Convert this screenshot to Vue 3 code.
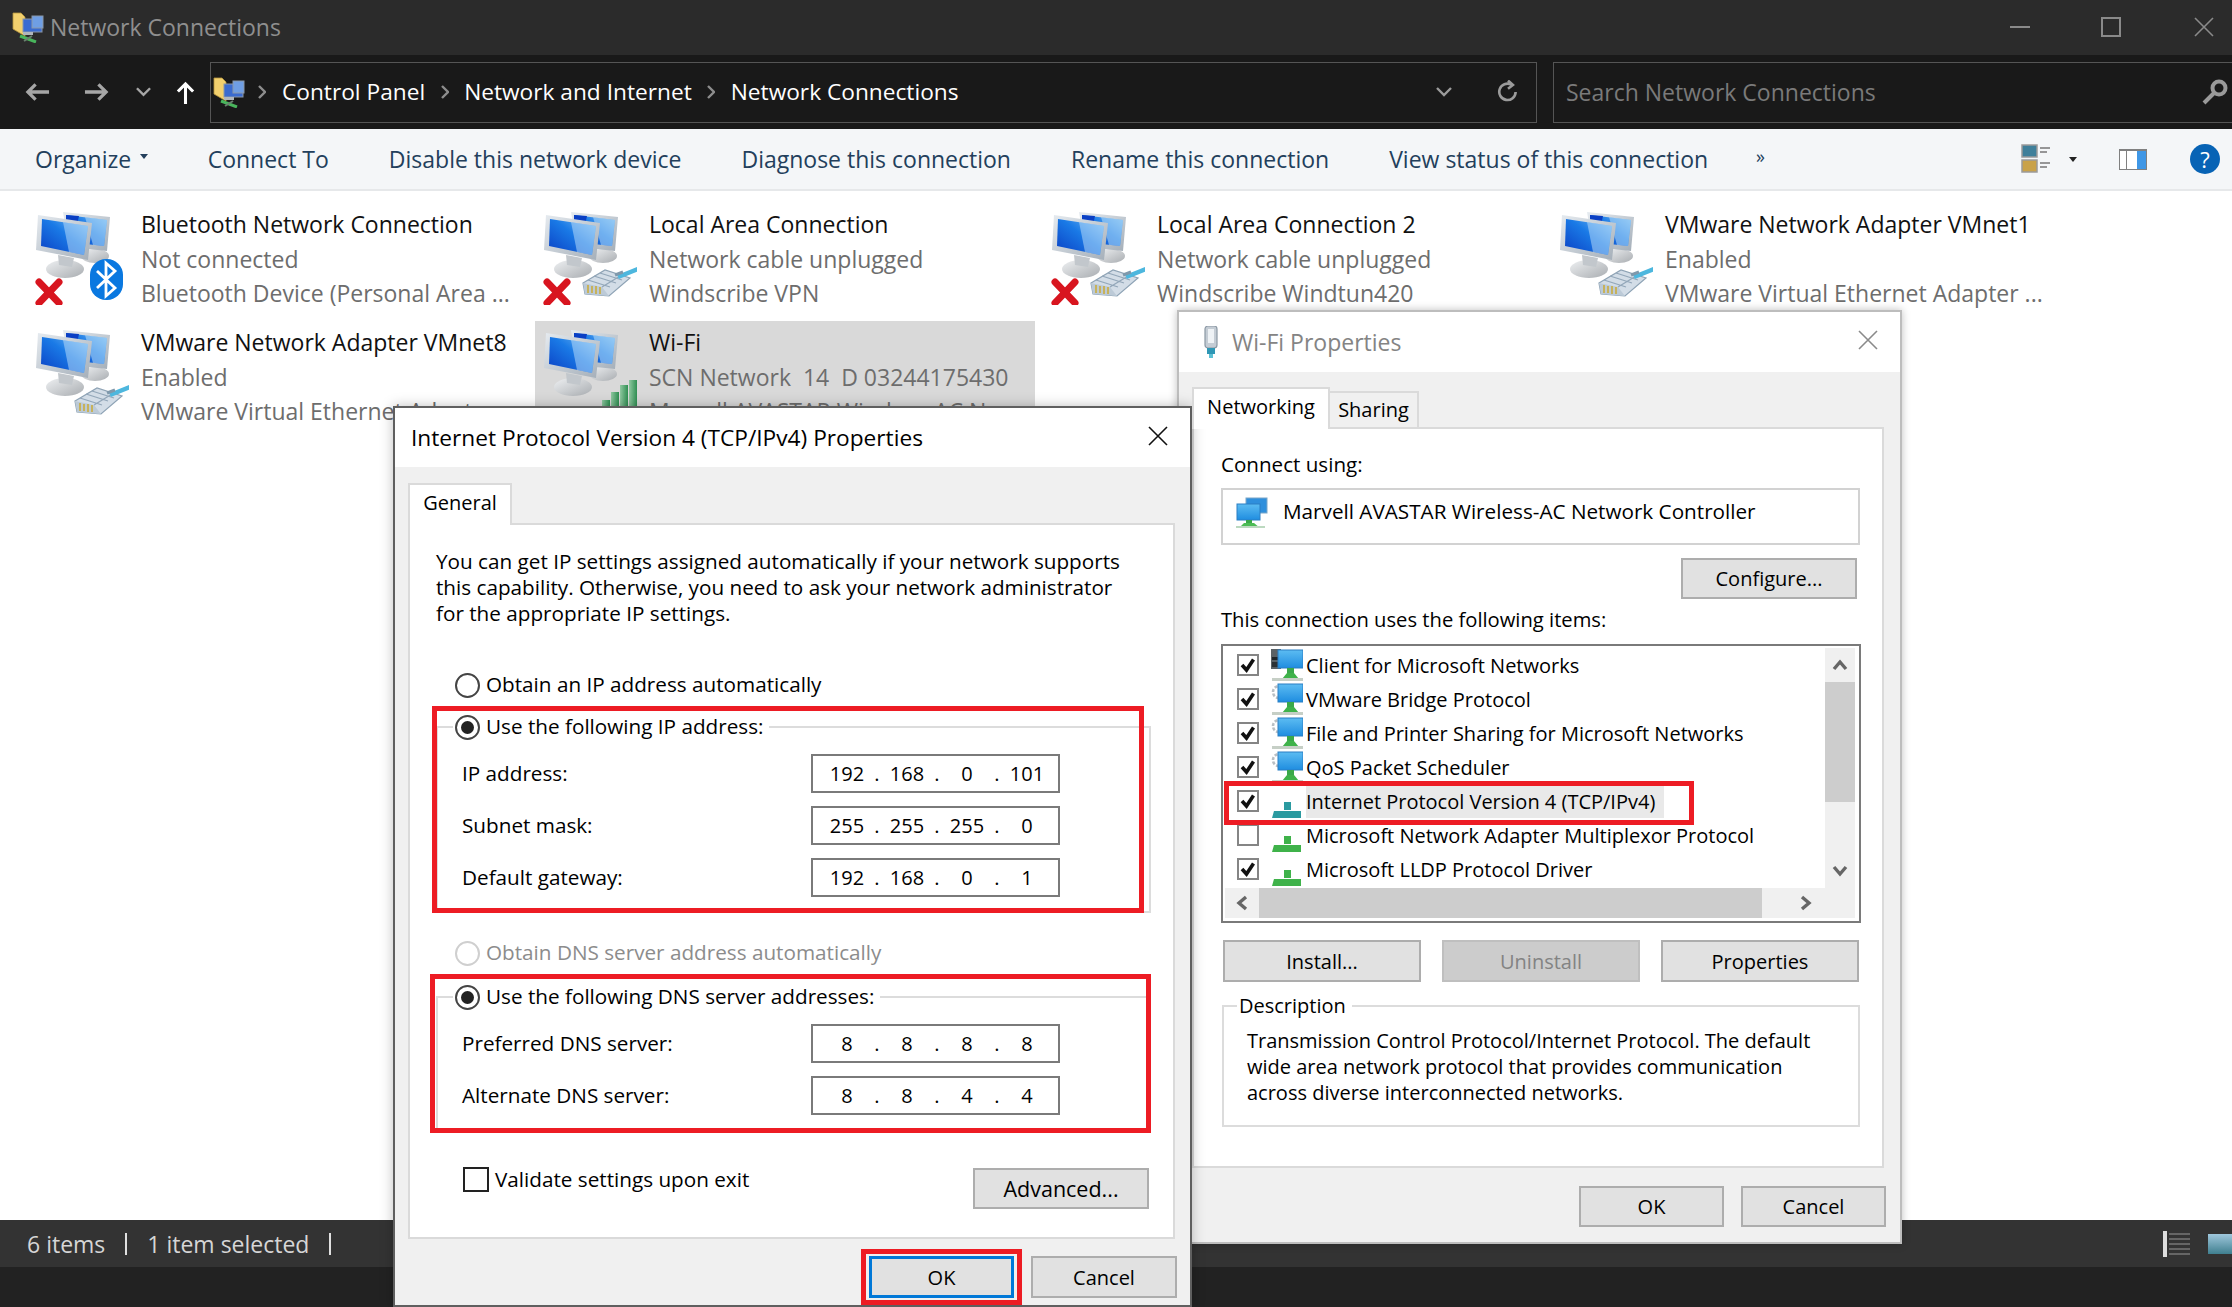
<template>
  <div class="desktop">
    <!-- shared icons -->
    <svg class="defs" aria-hidden="true">
      <defs>
        <linearGradient id="bezel" x1="0" y1="0" x2="1" y2="1">
          <stop offset="0" stop-color="#e6ebf0" />
          <stop offset="1" stop-color="#a4aeb8" />
        </linearGradient>
        <linearGradient id="screen" x1="0" y1="1" x2="1" y2="0">
          <stop offset="0" stop-color="#0a3fc4" />
          <stop offset="0.55" stop-color="#1a7ae6" />
          <stop offset="1" stop-color="#7cc0f4" />
        </linearGradient>
        <linearGradient id="base" x1="0" y1="0" x2="1" y2="1">
          <stop offset="0" stop-color="#eef0f2" />
          <stop offset="1" stop-color="#a9adb1" />
        </linearGradient>
        <linearGradient id="bar" x1="0" y1="0" x2="1" y2="0">
          <stop offset="0" stop-color="#8fc8a0" />
          <stop offset="1" stop-color="#2f8f52" />
        </linearGradient>
        <linearGradient id="lanscreen" x1="0" y1="0" x2="0" y2="1">
          <stop offset="0" stop-color="#5cbcf2" />
          <stop offset="1" stop-color="#1f8de0" />
        </linearGradient>
      </defs>
      <symbol id="pcs" viewBox="0 0 96 100">
        <ellipse cx="62" cy="51" rx="14" ry="7" fill="url(#base)" />
        <polygon points="30,7 77,12 74,46 36,42" fill="url(#bezel)" />
        <polygon points="33,10 74,15 71,41 34,37" fill="url(#screen)" />
        <polygon points="33,10 46,11 44,20 33,18" fill="#0a3fc4" />
        <polygon points="52,12 74,15 71,41 60,40" fill="#b7dcf8" opacity=".55" />
        <ellipse cx="32" cy="64" rx="19" ry="9" fill="url(#base)" />
        <polygon points="25,50 41,53 39,62 26,60" fill="#c2c7cc" />
        <polygon points="5,10 59,18 55,55 3,45" fill="url(#bezel)" />
        <polygon points="9,14 55,21 51,50 8,41" fill="url(#screen)" />
        <polygon points="30,17 55,21 51,50 36,47" fill="#bfe0fa" opacity=".5" />
      </symbol>
      <symbol id="plug" viewBox="0 0 96 100">
        <polygon points="42,78 64,65 89,73 68,91 44,89" fill="#d3dde7" stroke="#8ea3b5" stroke-width="1.2" />
        <polygon points="42,78 61,82 68,91 44,89" fill="#bccad7" />
        <path d="M47,75 L69,82 M53,71 L75,78 M59,68 L81,75 M61,82 L84,68" stroke="#93a7b9" stroke-width="1.3" fill="none" />
        <path d="M47,80 V88 M51,81 V88 M55,81 V89 M59,82 V89" stroke="#c7b25c" stroke-width="2" />
        <path d="M77,72 L97,64" stroke="#4db7de" stroke-width="4.5" />
        <path d="M74,70 L82,67" stroke="#7f98ab" stroke-width="3" />
      </symbol>
      <symbol id="bt" viewBox="0 0 96 100">
        <rect x="57" y="54" width="33" height="41" rx="16" fill="#0a78e0" />
        <path d="M64,66 L82,83 L73,91 L73,58 L82,66 L64,83" fill="none" stroke="#fff" stroke-width="2.8" />
      </symbol>
      <symbol id="cross" viewBox="0 0 96 100">
        <path d="M6,77 L26,98 M26,77 L6,98" stroke="#d8151f" stroke-width="7" stroke-linecap="round" />
      </symbol>
      <symbol id="bars" viewBox="0 0 96 100">
        <rect x="61" y="77" width="8" height="23" fill="url(#bar)" />
        <rect x="70" y="69" width="8" height="31" fill="url(#bar)" />
        <rect x="79" y="62" width="8" height="38" fill="url(#bar)" />
        <rect x="88" y="57" width="8" height="43" fill="url(#bar)" />
      </symbol>
      <symbol id="netfolder" viewBox="0 0 32 32">
        <path d="M1,2 L9,2 L13,6 L13,25 L1,18 Z" fill="#f2d06e" stroke="#b5953c" stroke-width=".8" />
        <rect x="11" y="8" width="19" height="13" fill="#3a6bd0" stroke="#8a98aa" stroke-width="1" />
        <rect x="20" y="5" width="11" height="12" fill="#6f9ee4" stroke="#8a98aa" stroke-width="1" />
        <rect x="11" y="21" width="10" height="3" fill="#b0b6bc" />
        <path d="M8,25 L24,31" stroke="#49b55c" stroke-width="3" />
        <path d="M12,30 L20,25" stroke="#6a7f6e" stroke-width="2" />
      </symbol>
      <symbol id="lan" viewBox="0 0 32 34">
        <rect x="7" y="2" width="25" height="18" fill="url(#lanscreen)" stroke="#2a7fc4" stroke-width="1" />
        <rect x="16" y="20" width="7" height="6" fill="#3aa84a" />
        <polygon points="16,25 23,25 28,31 11,31" fill="#3fb24a" />
        <rect x="1" y="30" width="31" height="3" fill="#c6cfc6" />
      </symbol>
      <symbol id="adapter" viewBox="0 0 32 34">
        <rect x="10" y="1" width="21" height="15" fill="#2f8fdc" stroke="#7aa6c8" stroke-width="1" />
        <rect x="1" y="7" width="23" height="16" fill="url(#lanscreen)" stroke="#2a7fc4" stroke-width="1" />
        <rect x="10" y="23" width="6" height="4" fill="#3aa84a" />
        <polygon points="8,26 18,26 24,31 3,31" fill="#4cbc55" />
        <rect x="0" y="29" width="29" height="2" fill="#bcd9c0" />
      </symbol>
      <symbol id="tower" viewBox="0 0 32 34">
        <rect x="0" y="1" width="10" height="20" fill="#5b6266" />
        <rect x="1" y="9" width="7" height="3" fill="#20262a" />
        <rect x="1" y="14" width="7" height="5" fill="#2c3236" />
      </symbol>
      <symbol id="gear" viewBox="0 0 32 34">
        <circle cx="8" cy="10" r="6" fill="none" stroke="#b9bfc4" stroke-width="2.6" stroke-dasharray="3 1.6" />
      </symbol>
      <symbol id="proto" viewBox="0 0 32 34">
        <rect x="13" y="18" width="7" height="8" fill="currentColor" />
        <polygon points="3,27 30,27 30,34 1,34" fill="currentColor" />
      </symbol>
    </svg>

    <div class="explorer">
      <header class="titlebar">
        <svg class="title-icon"><use href="#netfolder" /></svg>
        <span class="title-text">Network Connections</span>
        <div class="win-ctrls">
          <span class="ctrl-min"></span>
          <span class="ctrl-max"></span>
          <svg class="ctrl-close" viewBox="0 0 20 20"><path d="M1,1 L19,19 M19,1 L1,19" stroke="#8a8a8a" stroke-width="1.6" /></svg>
        </div>
      </header>

      <div class="addressbar">
        <div class="nav">
          <svg class="nav-back" viewBox="0 0 26 20"><path d="M25,10 H3 M11,2 L3,10 L11,18" fill="none" stroke="#a6a6a6" stroke-width="3.4" /></svg>
          <svg class="nav-fwd" viewBox="0 0 26 20"><path d="M1,10 H23 M15,2 L23,10 L15,18" fill="none" stroke="#a6a6a6" stroke-width="3.4" /></svg>
          <svg class="nav-down" viewBox="0 0 16 10"><path d="M1,1 L8,8 L15,1" fill="none" stroke="#a6a6a6" stroke-width="2.6" /></svg>
          <svg class="nav-up" viewBox="0 0 20 24"><path d="M10,24 V3 M2,11 L10,3 L18,11" fill="none" stroke="#fff" stroke-width="3.2" /></svg>
        </div>
        <div class="crumbs">
          <svg class="crumb-icon"><use href="#netfolder" /></svg>
          <template v-for="c in crumbs" :key="c">
            <svg class="crumb-sep" viewBox="0 0 8 14"><path d="M1,1 L7,7 L1,13" fill="none" stroke="#8d8d8d" stroke-width="2.4" /></svg>
            <span class="crumb">{{ c }}</span>
          </template>
          <svg class="crumb-drop" viewBox="0 0 16 10"><path d="M1,1 L8,8 L15,1" fill="none" stroke="#9b9b9b" stroke-width="2.4" /></svg>
          <svg class="crumb-refresh" viewBox="0 0 22 22"><path d="M18,11 A7.5,7.5 0 1 1 14,4.2 M11,0.5 L15.5,4.5 L11,8" fill="none" stroke="#9b9b9b" stroke-width="2.4" /></svg>
        </div>
        <div class="search">
          <span>Search Network Connections</span>
          <svg class="search-icon" viewBox="0 0 26 26"><circle cx="17" cy="9" r="6.5" fill="none" stroke="#9a9a9a" stroke-width="4" /><path d="M12,14 L2,24" stroke="#9a9a9a" stroke-width="4" /></svg>
        </div>
      </div>

      <nav class="toolbar">
        <span class="tool">Organize<i class="caret"></i></span>
        <span v-for="t in tools" :key="t" class="tool">{{ t }}</span>
        <span class="tool-more">»</span>
        <div class="tool-icons">
          <svg class="ti-view" viewBox="0 0 30 30">
            <rect x="1" y="1" width="15" height="12" fill="#3f7f9a" stroke="#9a9a9a" stroke-width="1.5" />
            <rect x="1" y="16" width="15" height="12" fill="#c9a24a" stroke="#9a9a9a" stroke-width="1.5" />
            <path d="M19,4 H29 M19,8 H26 M19,19 H29 M19,23 H26" stroke="#777" stroke-width="1.5" />
          </svg>
          <i class="ti-caret"></i>
          <div class="ti-pane"><span></span><span></span><span></span></div>
          <span class="ti-help">?</span>
        </div>
      </nav>

      <main class="content">
        <div v-for="n in connections" :key="n.name" class="conn" :class="{ selected: n.selected }">
          <svg class="conn-icon">
            <use href="#pcs" />
            <use v-for="b in n.badges" :key="b" :href="'#' + b" />
          </svg>
          <div class="conn-text">
            <div class="conn-name">{{ n.name }}</div>
            <div class="conn-sub">{{ n.status }}</div>
            <div class="conn-sub">{{ n.device }}</div>
          </div>
        </div>
      </main>

      <footer class="statusbar">
        <span>6 items</span>
        <i class="status-sep"></i>
        <span>1 item selected</span>
        <i class="status-sep"></i>
        <div class="status-right">
          <svg class="sr-list" viewBox="0 0 28 26"><path d="M7,3 H28 M7,8 H28 M7,13 H28 M7,18 H28 M7,23 H28" stroke="#777" stroke-width="1.4" /><rect x="1" y="0" width="4" height="26" fill="#ddd" /></svg>
          <span class="sr-thumb"></span>
        </div>
      </footer>
      <div class="taskbar"></div>
    </div>

    <!-- Wi-Fi Properties, behind -->
    <section class="dialog wifi">
      <div class="dlg-title">
        <svg class="wifi-icon" viewBox="0 0 22 32">
          <rect x="5" y="0" width="12" height="22" rx="3" fill="#c4ccd4" stroke="#8b98a4" stroke-width="1.2" />
          <rect x="8" y="3" width="6" height="14" fill="#eef2f5" />
          <rect x="7" y="22" width="8" height="6" fill="#2f97b5" />
          <rect x="9" y="28" width="4" height="4" fill="#5cc0d4" />
        </svg>
        <span class="dlg-caption muted">Wi-Fi Properties</span>
        <svg class="dlg-x" viewBox="0 0 20 20"><path d="M1,1 L19,19 M19,1 L1,19" stroke="#8a8a8a" stroke-width="1.6" /></svg>
      </div>
      <div class="tabs wifi-tabs">
        <span class="tab active">Networking</span>
        <span class="tab back">Sharing</span>
      </div>
      <div class="panel wifi-panel">
        <div class="wifi-label first">Connect using:</div>
        <div class="adapter">
          <svg class="adapter-icon"><use href="#adapter" /></svg>
          <span>Marvell AVASTAR Wireless-AC Network Controller</span>
        </div>
        <div class="cfg-row"><button class="btn cfg">Configure...</button></div>
        <div class="wifi-label">This connection uses the following items:</div>
        <div class="listbox">
          <div class="rows">
            <div v-for="it in items" :key="it.text" class="row" :class="{ sel: it.sel }">
              <span class="chk"><svg v-if="it.on" viewBox="0 0 16 16"><path d="M2,8 L6.5,13 L13.5,2.5" fill="none" stroke="#111" stroke-width="3.6" /></svg></span>
              <svg v-if="it.kind !== 'proto'" class="row-icon">
                <use v-if="it.kind === 'tower'" href="#tower" />
                <use v-if="it.kind === 'gear'" href="#gear" />
                <use href="#lan" />
              </svg>
              <svg v-else class="row-icon" :class="it.sel ? 'teal' : 'green'"><use href="#proto" /></svg>
              <span class="row-text">{{ it.text }}</span>
            </div>
          </div>
          <div class="vscroll">
            <span class="sb-btn"><svg viewBox="0 0 16 12"><path d="M2,10 L8,3 L14,10" fill="none" stroke="#666" stroke-width="3.4" /></svg></span>
            <span class="vthumb"></span>
            <span class="sb-btn down"><svg viewBox="0 0 16 12"><path d="M2,2 L8,9 L14,2" fill="none" stroke="#666" stroke-width="3.4" /></svg></span>
          </div>
          <div class="hscroll">
            <span class="hb-btn"><svg viewBox="0 0 12 16"><path d="M10,2 L3,8 L10,14" fill="none" stroke="#666" stroke-width="3.4" /></svg></span>
            <span class="hthumb"></span>
            <span class="hb-btn right"><svg viewBox="0 0 12 16"><path d="M2,2 L9,8 L2,14" fill="none" stroke="#666" stroke-width="3.4" /></svg></span>
          </div>
        </div>
        <div class="item-btns">
          <button class="btn">Install...</button>
          <button class="btn off">Uninstall</button>
          <button class="btn">Properties</button>
        </div>
        <fieldset class="desc">
          <legend>Description</legend>
          <p>Transmission Control Protocol/Internet Protocol. The default<br>wide area network protocol that provides communication<br>across diverse interconnected networks.</p>
        </fieldset>
      </div>
      <div class="dlg-foot wifi-foot">
        <button class="btn foot">OK</button>
        <button class="btn foot">Cancel</button>
      </div>
      <div class="mark mark-row"></div>
    </section>

    <!-- TCP/IPv4 Properties, in front -->
    <section class="dialog ipv4">
      <div class="dlg-title">
        <span class="dlg-caption">Internet Protocol Version 4 (TCP/IPv4) Properties</span>
        <svg class="dlg-x" viewBox="0 0 20 20"><path d="M1,1 L19,19 M19,1 L1,19" stroke="#111" stroke-width="1.6" /></svg>
      </div>
      <div class="tabs ipv4-tabs">
        <span class="tab active general">General</span>
      </div>
      <div class="panel ipv4-panel">
        <p class="intro">You can get IP settings assigned automatically if your network supports<br>this capability. Otherwise, you need to ask your network administrator<br>for the appropriate IP settings.</p>

        <div class="radio-row first"><i class="radio"></i>Obtain an IP address automatically</div>
        <fieldset class="group">
          <legend><i class="radio on"></i>Use the following IP address:</legend>
          <div class="fields">
            <div v-for="f in ipFields" :key="f.label" class="field">
              <span class="field-label">{{ f.label }}</span>
              <div class="ipbox">
                <template v-for="(o, i) in f.octets" :key="i">
                  <span class="dot" v-if="i > 0">.</span>
                  <span class="octet">{{ o }}</span>
                </template>
              </div>
            </div>
          </div>
        </fieldset>

        <div class="radio-row disabled"><i class="radio"></i>Obtain DNS server address automatically</div>
        <fieldset class="group dns">
          <legend><i class="radio on"></i>Use the following DNS server addresses:</legend>
          <div class="fields">
            <div v-for="f in dnsFields" :key="f.label" class="field">
              <span class="field-label">{{ f.label }}</span>
              <div class="ipbox">
                <template v-for="(o, i) in f.octets" :key="i">
                  <span class="dot" v-if="i > 0">.</span>
                  <span class="octet">{{ o }}</span>
                </template>
              </div>
            </div>
          </div>
        </fieldset>

        <div class="bottom-row">
          <label class="validate"><i class="box"></i><span class="validate-text">Validate settings upon exit</span></label>
          <button class="btn advanced">Advanced...</button>
        </div>
      </div>
      <div class="dlg-foot ipv4-foot">
        <button class="btn foot default">OK</button>
        <button class="btn foot">Cancel</button>
      </div>
      <div class="mark mark-ip"></div>
      <div class="mark mark-dns"></div>
      <div class="mark mark-ok"></div>
    </section>
  </div>
</template>

<script setup>
const crumbs = ['Control Panel', 'Network and Internet', 'Network Connections']
const tools = [
  'Connect To',
  'Disable this network device',
  'Diagnose this connection',
  'Rename this connection',
  'View status of this connection'
]

const connections = [
  { name: 'Bluetooth Network Connection', status: 'Not connected', device: 'Bluetooth Device (Personal Area ...', badges: ['cross', 'bt'] },
  { name: 'Local Area Connection', status: 'Network cable unplugged', device: 'Windscribe VPN', badges: ['cross', 'plug'] },
  { name: 'Local Area Connection 2', status: 'Network cable unplugged', device: 'Windscribe Windtun420', badges: ['cross', 'plug'] },
  { name: 'VMware Network Adapter VMnet1', status: 'Enabled', device: 'VMware Virtual Ethernet Adapter ...', badges: ['plug'] },
  { name: 'VMware Network Adapter VMnet8', status: 'Enabled', device: 'VMware Virtual Ethernet Adapter ...', badges: ['plug'] },
  { name: 'Wi-Fi', status: 'SCN Network  14  D 03244175430', device: 'Marvell AVASTAR Wireless-AC N...', badges: ['bars'], selected: true }
]

const items = [
  { text: 'Client for Microsoft Networks', on: true, kind: 'tower' },
  { text: 'VMware Bridge Protocol', on: true, kind: 'gear' },
  { text: 'File and Printer Sharing for Microsoft Networks', on: true, kind: 'gear' },
  { text: 'QoS Packet Scheduler', on: true, kind: 'gear' },
  { text: 'Internet Protocol Version 4 (TCP/IPv4)', on: true, kind: 'proto', sel: true },
  { text: 'Microsoft Network Adapter Multiplexor Protocol', on: false, kind: 'proto' },
  { text: 'Microsoft LLDP Protocol Driver', on: true, kind: 'proto' }
]

const ipFields = [
  { label: 'IP address:', octets: ['192', '168', '0', '101'] },
  { label: 'Subnet mask:', octets: ['255', '255', '255', '0'] },
  { label: 'Default gateway:', octets: ['192', '168', '0', '1'] }
]
const dnsFields = [
  { label: 'Preferred DNS server:', octets: ['8', '8', '8', '8'] },
  { label: 'Alternate DNS server:', octets: ['8', '8', '4', '4'] }
]
</script>

<style>
html, body { margin: 0; background: #fff; overflow: hidden; }
</style>

<style scoped>
.desktop {
  position: relative;
  width: 2232px;
  height: 1307px;
  overflow: hidden;
  font-family: "Open Sans", "Noto Sans", sans-serif;
}
.defs { position: absolute; width: 0; height: 0; }
i { display: block; font-style: normal; }

/* explorer window */
.explorer { display: flex; flex-direction: column; height: 100%; background: #fff; }
.titlebar { height: 55px; box-sizing: border-box; background: #2b2b2b; display: flex; align-items: center; padding: 0 0 2px 12px; color: #8f8f8f; font-size: 23px; }
.title-icon { width: 32px; height: 32px; margin-right: 6px; }
.win-ctrls { margin-left: auto; display: flex; align-items: center; }
.ctrl-min { width: 20px; height: 2px; background: #8a8a8a; margin-right: 71px; }
.ctrl-max { width: 20px; height: 20px; box-sizing: border-box; border: 2px solid #8a8a8a; margin-right: 73px; }
.ctrl-close { width: 20px; height: 20px; margin-right: 18px; }

.addressbar { height: 74px; background: #191919; display: flex; align-items: center; color: #fff; font-size: 23px; }
.nav { width: 210px; flex: none; display: flex; align-items: center; padding-left: 25px; box-sizing: border-box; }
.nav-back, .nav-fwd { width: 25px; height: 20px; }
.nav-fwd { margin-left: 34px; }
.nav-down { width: 15px; height: 10px; margin-left: 27px; }
.nav-up { width: 19px; height: 23px; margin-left: 25px; }
.crumbs { width: 1327px; height: 61px; box-sizing: border-box; border: 1px solid #555; display: flex; align-items: center; padding-left: 2px; font-size: 22.7px; }
.crumb { margin-top: -2px; }
.crumb-icon { width: 32px; height: 32px; }
.crumb-sep { width: 8px; height: 14px; margin: 0 15.5px; }
.crumb-icon + .crumb-sep { margin-left: 13px; margin-right: 16px; }
.crumb-drop { width: 16px; height: 10px; margin-left: auto; }
.crumb-refresh { width: 24px; height: 24px; margin-left: 44px; margin-right: 16px; }
.search { flex: 1; height: 61px; margin-left: 16px; box-sizing: border-box; border: 1px solid #555; border-right: 0; display: flex; align-items: center; padding-left: 12px; color: #7a7a7a; }
.search-icon { width: 26px; height: 26px; margin-left: auto; margin-right: 4px; }

.toolbar { height: 62px; box-sizing: border-box; background: #f4f6f8; border-bottom: 2px solid #e6e8ea; display: flex; align-items: center; padding-left: 35px; gap: 60px; color: #233f5c; font-size: 23px; }
.tool { display: flex; align-items: center; white-space: nowrap; }
.caret { width: 0; height: 0; border: 4px solid transparent; border-top: 5px solid #233f5c; border-bottom: 0; margin-left: 8.5px; margin-top: -6px; }
.tool-more { margin-left: -12px; font-size: 18px; margin-top: -6px; }
.tool-icons { margin-left: auto; display: flex; align-items: center; padding-right: 12px; }
.ti-view { width: 30px; height: 30px; }
.ti-caret { width: 0; height: 0; border: 4px solid transparent; border-top: 5px solid #222; border-bottom: 0; margin-left: 18px; }
.ti-pane { width: 28px; height: 21px; margin-left: 42px; display: flex; box-sizing: border-box; border: 1px solid #808080; border-top-width: 2px; background: #fff; }
.ti-pane span { width: 6px; border-right: 1px solid #808080; }
.ti-pane span:nth-child(2) { width: 10px; border: 0; }
.ti-pane span:nth-child(3) { flex: 1; width: auto; background: #3f97e6; border: 0; }
.ti-help { width: 30px; height: 30px; margin-left: 43px; border-radius: 50%; background: #0763b5; color: #fff; font-size: 22px; line-height: 30px; text-align: center; }

.content { flex: 1; min-height: 0; display: grid; grid-template-columns: repeat(4, 508px); grid-auto-rows: 118px; padding: 12px 0 0 35px; align-content: start; }
.conn { display: flex; box-sizing: border-box; width: 500px; height: 118px; margin-left: -8px; padding-left: 8px; }
.conn.selected { background: #d9d9d9; }
.conn-icon { width: 96px; height: 100px; margin-left: -2px; margin-top: 2px; flex: none; }
.conn-text { margin-left: 12px; line-height: 34px; font-size: 23px; color: #6d6d6d; white-space: nowrap; padding-top: 4px; }
.conn-name { color: #111; height: 35px; }
.conn-sub { white-space: pre; }

.statusbar { height: 47px; background: #333; color: #d6d6d6; display: flex; align-items: center; padding-left: 27px; font-size: 23px; flex: none; }
.status-sep { width: 2px; height: 22px; background: #e0e0e0; margin: 0 20px; }
.status-right { margin-left: auto; display: flex; align-items: center; }
.sr-list { width: 28px; height: 26px; margin-right: 18px; }
.sr-thumb { width: 24px; height: 20px; background: linear-gradient(#9fc7dc, #3f7f8f); }
.taskbar { height: 40px; background: #222; flex: none; }

/* dialogs */
.dialog { position: absolute; box-sizing: border-box; border: 2px solid #bdbdbd; background: #f0f0f0; display: flex; flex-direction: column; color: #000; font-size: 20px; }
.ipv4 { left: 393px; top: 406px; width: 799px; height: 901px; border-color: #5f5f5f; box-shadow: 0 0 12px rgba(0, 0, 0, 0.25); font-size: 20.7px; }
.wifi { left: 1177px; top: 310px; width: 725px; height: 934px; box-shadow: 0 0 8px rgba(0, 0, 0, 0.25); }
.dlg-title { height: 60px; flex: none; background: #fff; display: flex; align-items: center; padding-left: 16px; font-size: 22.7px; }
.dlg-x { width: 20px; height: 20px; margin-left: auto; margin-right: 22px; margin-top: -4px; }
.ipv4 .dlg-title { height: 59px; }
.wifi .dlg-title { padding-left: 21px; font-size: 23px; }
.wifi-icon { width: 22px; height: 32px; margin-right: 10px; }
.muted { color: #848484; }

.tabs { display: flex; align-items: flex-end; flex: none; padding-left: 13px; height: 55px; box-sizing: border-box; font-size: 20px; }
.ipv4-tabs { height: 56px; }
.tab { box-sizing: border-box; border: 2px solid #dadada; border-bottom: 0; display: flex; align-items: center; justify-content: center; margin-bottom: -2px; position: relative; z-index: 1; }
.tab.active { height: 42px; background: #fff; padding-bottom: 6px; }
.tab.back { background: #f0f0f0; border-left: 0; z-index: 0; width: 89px; margin-bottom: 0; height: 36px; padding-bottom: 2px; }
.wifi-tabs .active { width: 138px; }
.general { width: 104px; }

.panel { box-sizing: border-box; background: #fff; border: 2px solid #dadada; }

/* ipv4 panel */
.ipv4-panel { margin-left: 13px; width: 767px; flex: 1; min-height: 0; padding: 23px 0 0 26px; }
.intro { margin: 0; line-height: 26px; white-space: nowrap; }
.radio-row { height: 30px; box-sizing: border-box; display: flex; align-items: center; margin-left: 19px; padding-bottom: 3px; white-space: nowrap; }
.radio-row.first { margin-top: 44px; margin-bottom: 12px; }
.radio-row.disabled { color: #8c8c8c; margin-top: 25px; margin-bottom: 14px; }
.radio-row.disabled .radio { border-color: #cfcfcf; }
.radio { width: 25px; height: 25px; box-sizing: border-box; border: 2px solid #444; border-radius: 50%; margin: 3px 6px 0 0; flex: none; position: relative; }
.radio.on::after { content: ""; position: absolute; inset: 4px; border-radius: 50%; background: #222; }

.group { border: 2px solid #dcdcdc; margin: 0; padding: 0 0 14px; width: 715px; box-sizing: border-box; min-width: 0; }
.group legend { display: flex; align-items: center; height: 30px; padding: 0 6px 3px 2px; margin-left: 15px; white-space: nowrap; box-sizing: border-box; }
.group.dns { padding-bottom: 16px; }
.fields { display: flex; flex-direction: column; gap: 13px; padding: 12px 0 0 24px; }
.field { display: grid; grid-template-columns: 349px 249px; align-items: center; }
.field-label { margin-top: -2px; }
.ipbox { height: 39px; box-sizing: border-box; border: 2px solid #7a7a7a; background: #fff; display: flex; align-items: center; padding-left: 14px; font-size: 20px; }
.octet { width: 40px; text-align: center; }
.dot { width: 20px; text-align: center; }

.bottom-row { display: flex; justify-content: space-between; align-items: flex-start; margin-top: 35px; padding-left: 27px; padding-right: 24px; }
.validate { display: flex; align-items: center; height: 25px; margin-top: -1px; }
.validate-text { margin-top: -2px; }
.box { width: 26px; height: 25px; box-sizing: border-box; border: 2px solid #222; margin-right: 6px; background: #fff; }

.btn { box-sizing: border-box; font: inherit; color: #000; background: #e1e1e1; border: 2px solid #adadad; padding: 0; height: 41px; }
.advanced { width: 176px; font-size: 21.5px; }
.dlg-foot { display: flex; flex: none; justify-content: flex-end; }
.ipv4-foot { height: 66px; padding: 17px 13px 0 0; gap: 17px; box-sizing: border-box; font-size: 20px; }
.ipv4-foot .foot { width: 146px; height: 42px; }
.ipv4-foot .default { width: 145px; border: 3px solid #0078d7; }
.wifi-foot { flex: 1; padding: 18px 14px 0 0; gap: 17px; }
.wifi-foot .foot { width: 145px; }

/* wifi panel */
.wifi-panel { margin-left: 13px; width: 692px; height: 741px; flex: none; padding: 22px 0 0 27px; }
.wifi-label { line-height: 26px; margin-top: 7px; white-space: nowrap; font-size: 20.2px; }
.wifi-label.first { margin-top: 0; font-size: 20.6px; }
.adapter { width: 639px; height: 57px; box-sizing: border-box; margin-top: 11px; border: 2px solid #d2d2d2; display: flex; align-items: flex-start; padding: 7px 0 0 13px; }
.adapter-icon { width: 32px; height: 34px; margin-right: 15px; }
.adapter span { line-height: 29px; white-space: nowrap; font-size: 20.7px; }
.cfg-row { width: 636px; display: flex; justify-content: flex-end; margin-top: 13px; }
.cfg { width: 176px; }

.listbox { width: 640px; height: 279px; margin-top: 12px; box-sizing: border-box; border: 2px solid #7a7a7a; padding: 2px 4px 3px 2px; display: grid; grid-template-columns: 600px 30px; grid-template-rows: 240px 30px; overflow: hidden; }
.rows { overflow: hidden; }
.row { display: flex; align-items: center; height: 34px; padding-left: 12px; white-space: nowrap; }
.chk { width: 22px; height: 22px; box-sizing: border-box; border: 2px solid #858585; flex: none; display: flex; align-items: center; justify-content: center; }
.chk svg { width: 16px; height: 16px; }
.row-icon { width: 32px; height: 34px; margin-left: 12px; flex: none; }
.row-text { margin-left: 3px; height: 33px; line-height: 33px; }
.row.sel .row-text { background: #e9e9e9; padding-right: 9px; }
.green { color: #3fb24a; }
.teal { color: #2b9aa0; }
.vscroll { background: #f0f0f0; display: flex; flex-direction: column; }
.sb-btn { height: 34px; display: flex; align-items: center; justify-content: center; flex: none; }
.sb-btn svg { width: 16px; height: 12px; }
.sb-btn.down { margin-top: auto; }
.vthumb { height: 120px; background: #cdcdcd; flex: none; }
.hscroll { grid-column: 1 / 3; background: #f0f0f0; display: flex; }
.hb-btn { width: 34px; display: flex; align-items: center; justify-content: center; flex: none; }
.hb-btn svg { width: 12px; height: 16px; }
.hb-btn.right { margin-left: 27px; }
.hthumb { width: 503px; background: #cdcdcd; flex: none; }

.item-btns { display: flex; gap: 21px; margin-top: 17px; margin-left: 2px; }
.item-btns .btn { width: 198px; height: 42px; }
.btn.off { background: #cccccc; border-color: #bfbfbf; color: #838383; }

.desc { width: 638px; box-sizing: border-box; margin: 10px 0 0 1px; padding: 0 0 19px 23px; border: 2px solid #dcdcdc; min-width: 0; }
.desc legend { margin-left: -10px; padding: 0 6px 0 2px; height: 28px; line-height: 28px; }
.desc p { margin: 8px 0 0; line-height: 26px; white-space: nowrap; }

/* red annotation frames */
.mark { position: absolute; box-sizing: border-box; border: 5px solid #ed1c24; z-index: 5; pointer-events: none; }
.mark-ip { left: 37px; top: 298px; width: 712px; height: 207px; }
.mark-dns { left: 35px; top: 566px; width: 721px; height: 159px; }
.mark-ok { left: 466px; top: 841px; width: 161px; height: 56px; }
.mark-row { left: 45px; top: 469px; width: 470px; height: 44px; }
</style>
